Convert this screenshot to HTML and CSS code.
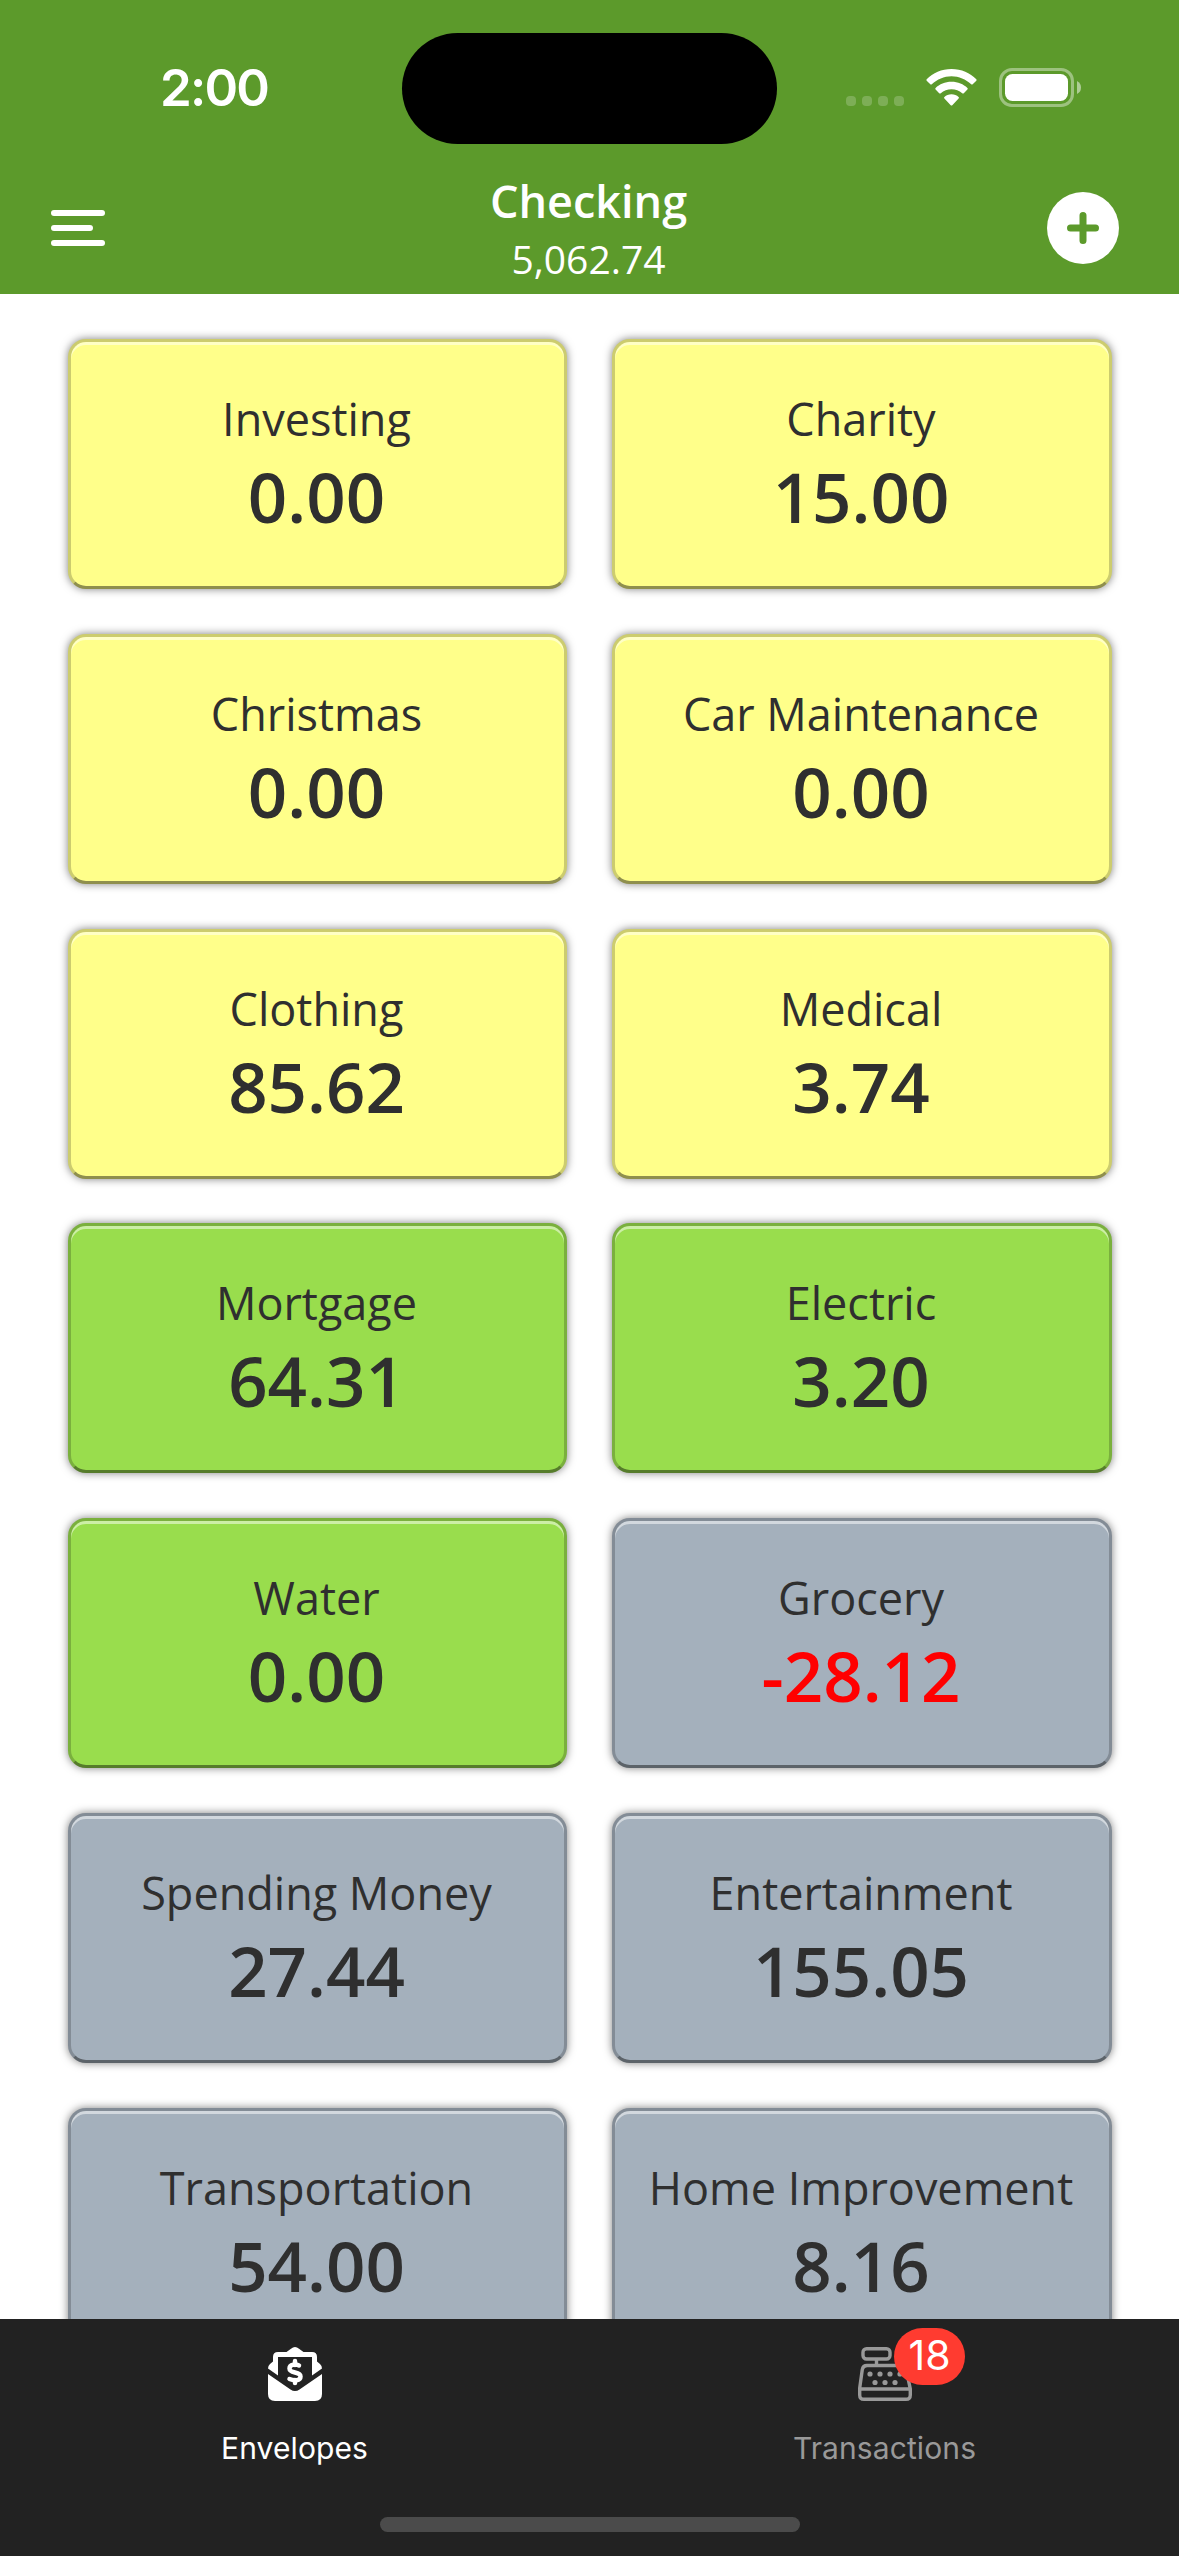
FILE: index.html
```html
<!DOCTYPE html>
<html lang="en">
<head>
<meta charset="utf-8">
<meta name="viewport" content="width=device-width, initial-scale=1">
<title>Checking</title>
<link rel="stylesheet" href="styles.css">
</head>
<body>
<header class="header">
  <div class="status">
    <div class="time">2:00</div>
    <div class="island"></div>
    <div class="indicators">
      <svg class="signal" width="58" height="10" viewBox="0 0 58 10">
        <rect width="10" height="10" rx="4"/>
        <rect x="16" width="10" height="10" rx="4"/>
        <rect x="32" width="10" height="10" rx="4"/>
        <rect x="48" width="10" height="10" rx="4"/>
      </svg>
      <svg class="wifi" width="51" height="37" viewBox="0 0 51 37">
        <path d="M25.500 0 C35.500 0 44 4 50.300 10.200 Q51 11 50.300 11.700 L46.700 15.200 Q46 15.900 45.200 15.200 C39.800 10.400 33 7.300 25.500 7.300 C18 7.300 11.200 10.400 5.800 15.200 Q5 15.900 4.300 15.200 L.7 11.700 Q0 11 .7 10.200 C7 4 15.500 0 25.500 0 Z"/>
        <path d="M25.500 12.800 C32 12.800 37.500 15.200 41.400 19 Q42.200 19.700 41.400 20.500 L37.800 24.200 Q37 24.900 36.200 24.200 C33.300 21.700 29.600 20.200 25.500 20.200 C21.400 20.200 17.700 21.700 14.800 24.200 Q14 24.900 13.200 24.200 L9.600 20.500 Q8.800 19.700 9.600 19 C13.500 15.200 19 12.800 25.500 12.800 Z"/>
        <path d="M25.500 25.300 C28.400 25.300 30.700 26.300 32.600 28 Q33.400 28.700 32.600 29.500 L26.300 36.200 Q25.500 37 24.700 36.200 L18.400 29.500 Q17.600 28.700 18.400 28 C20.300 26.300 22.600 25.300 25.500 25.300 Z"/>
      </svg>
      <svg class="battery" width="82" height="39" viewBox="0 0 82 39">
        <rect class="shell" x="1.500" y="1.500" width="72" height="36" rx="11.500"/>
        <rect x="6" y="6" width="63" height="27" rx="7.500"/>
        <path class="tip" d="M78 13 Q82 15 82 19.500 Q82 24 78 26 Z"/>
      </svg>
    </div>
  </div>
  <div class="toolbar">
    <svg class="menu" width="54" height="36" viewBox="0 0 54 36">
      <rect width="54" height="6" rx="3"/>
      <rect y="15" width="42" height="6" rx="3"/>
      <rect y="30" width="54" height="6" rx="3"/>
    </svg>
    <div class="title">
      <h1>Checking</h1>
      <div class="balance">5,062.74</div>
    </div>
    <svg class="add" width="72" height="72" viewBox="0 0 72 72">
      <circle cx="36" cy="36" r="36"/>
      <path d="M36 23.500V48.500M23.500 36H48.500"/>
    </svg>
  </div>
</header>

<main class="envelopes">
  <div class="card yellow"><div class="name">Investing</div><div class="amount">0.00</div></div>
  <div class="card yellow"><div class="name">Charity</div><div class="amount">15.00</div></div>
  <div class="card yellow"><div class="name">Christmas</div><div class="amount">0.00</div></div>
  <div class="card yellow"><div class="name">Car Maintenance</div><div class="amount">0.00</div></div>
  <div class="card yellow"><div class="name">Clothing</div><div class="amount">85.62</div></div>
  <div class="card yellow"><div class="name">Medical</div><div class="amount">3.74</div></div>
  <div class="card green"><div class="name">Mortgage</div><div class="amount">64.31</div></div>
  <div class="card green"><div class="name">Electric</div><div class="amount">3.20</div></div>
  <div class="card green"><div class="name">Water</div><div class="amount">0.00</div></div>
  <div class="card gray"><div class="name">Grocery</div><div class="amount negative">-28.12</div></div>
  <div class="card gray"><div class="name">Spending Money</div><div class="amount">27.44</div></div>
  <div class="card gray"><div class="name">Entertainment</div><div class="amount">155.05</div></div>
  <div class="card gray"><div class="name">Transportation</div><div class="amount">54.00</div></div>
  <div class="card gray"><div class="name">Home Improvement</div><div class="amount">8.16</div></div>
</main>

<nav class="tabs">
  <div class="tab active">
    <div class="tab-icon">
      <svg width="54" height="54" viewBox="0 0 54 54">
        <path fill="currentColor" d="M0 27 L22.500 42.500 Q27 45.500 31.500 42.500 L54 27 V47 Q54 54 47 54 H7 Q0 54 0 47 Z"/>
        <path fill="currentColor" d="M5 14.500 V10 Q5 5 10 5 H18.500 L23 1.700 Q27 -1.500 31 1.700 L35.500 5 H44 Q49 5 49 10 V14.500 L52 17 Q54 18.800 54 21.500 L44 28.500 V10 H10 V28.500 L0 21.500 Q0 18.800 2 17 Z"/>
        <path class="dollar" d="M27 14V18M31 18.500C28 17 21.500 17 21.500 21.500C21.500 27 32.500 24 32.500 29.500C32.500 34 26 34 21.500 32M27 33V36"/>
      </svg>
    </div>
    <div class="tab-label">Envelopes</div>
  </div>
  <div class="tab">
    <div class="tab-icon">
      <svg width="54" height="54" viewBox="0 0 54 54">
        <g class="outline">
          <rect x="5" y="1.700" width="27" height="10.300" rx="3.500"/>
          <path d="M18.500 12V18.500M10.500 18.500H43.500Q47.500 18.500 48.200 22.500L52.300 42V48Q52.300 52.300 48 52.300H6Q1.700 52.300 1.700 48V41L4.300 22.500Q5 18.500 9 18.500ZM1.700 42H52.300"/>
        </g>
        <g fill="currentColor">
          <circle cx="12" cy="27" r="2.600"/>
          <circle cx="22" cy="27" r="2.600"/>
          <circle cx="32" cy="27" r="2.600"/>
          <circle cx="42" cy="27" r="2.600"/>
          <circle cx="17" cy="35.500" r="2.600"/>
          <circle cx="27" cy="35.500" r="2.600"/>
          <circle cx="37" cy="35.500" r="2.600"/>
        </g>
      </svg>
      <span class="badge">18</span>
    </div>
    <div class="tab-label">Transactions</div>
  </div>
  <div class="home-bar"></div>
</nav>
</body>
</html>
```

FILE: styles.css
```css
* {
  box-sizing: border-box;
}
body {
  margin: 0;
  height: 2556px;
  display: flex;
  flex-direction: column;
  overflow: hidden;
  background-color: #fff;
  color: #2f2f2f;
  font-family: "Open Sans", sans-serif;
}
svg {
  display: block;
}

/* header */
.header {
  flex: none;
  height: 294px;
  background-color: #5c9a2b;
  color: #fff;
}
.status {
  height: 177px;
  display: grid;
  grid-template-columns: 402px 375px 402px;
}
.time {
  padding: 57px 0 0 160px;
  font-family: Inter, sans-serif;
  font-size: 51px;
  font-weight: 600;
  letter-spacing: -1.8px;
  line-height: 62px;
}
.island {
  height: 111px;
  margin-top: 33px;
  border-radius: 56px;
  background-color: #000;
}
.indicators {
  display: flex;
  align-items: flex-end;
  height: 107px;
  padding-left: 69px;
  fill: #fff;
}
.signal {
  margin: 0 22px 1px 0;
  opacity: 0.2;
}
.wifi {
  margin: 0 22px 1px 0;
}
.shell {
  fill: none;
  stroke: #fff;
  stroke-width: 3px;
  opacity: 0.4;
}
.tip {
  opacity: 0.5;
}
.toolbar {
  height: 117px;
  display: grid;
  grid-template-columns: 300px 1fr 300px;
}
.menu {
  margin: 33px 0 0 51px;
  fill: #fff;
}
.title {
  padding-right: 2px;
  text-align: center;
}
h1 {
  margin: 0;
  font-size: 45px;
  font-weight: 600;
  line-height: 48px;
}
.balance {
  font-size: 39px;
  line-height: 67px;
}
.add {
  margin: 15px 60px 0 auto;
  fill: #fff;
}
.add path {
  stroke: #5c9a2b;
  stroke-width: 7px;
  stroke-linecap: round;
}

/* envelopes */
.envelopes {
  flex: 1;
  min-height: 0;
  overflow: hidden;
  display: grid;
  grid-template-columns: 499px 500px;
  grid-auto-rows: 250px;
  align-content: start;
  gap: 44.75px 45px;
  padding: 45px 67px 0 68px;
}
.card {
  padding: 43px 2px 0 0;
  border: 3px solid rgba(0, 0, 0, 0.2);
  border-bottom-color: rgba(0, 0, 0, 0.44);
  border-radius: 18px;
  box-shadow: inset 0 3px 0 rgba(255, 255, 255, 0.5), 0 0 9px rgba(0, 0, 0, 0.5);
  text-align: center;
}
.yellow {
  background-color: #ffff8a;
}
.green {
  background-color: #99dd4d;
}
.gray {
  background-color: #a4b0bc;
}
.name {
  font-size: 45px;
  line-height: 67px;
}
.amount {
  font-size: 69px;
  font-weight: 600;
  line-height: 88px;
}
.negative {
  color: #f00;
}

/* tabs */
.tabs {
  position: relative;
  flex: none;
  height: 237px;
  display: grid;
  grid-template-columns: 590px 590px;
  padding-top: 28px;
  background-color: #222;
}
.tab {
  display: flex;
  flex-direction: column;
  align-items: center;
  color: #999;
}
.active {
  color: #fff;
}
.tab-icon {
  position: relative;
}
.tab-label {
  margin-top: 27px;
  padding-right: 1px;
  font-family: Inter, sans-serif;
  font-size: 30px;
  letter-spacing: 0.1px;
  line-height: 40px;
}
.dollar {
  fill: none;
  stroke: currentColor;
  stroke-width: 4.5px;
  stroke-linecap: round;
}
.outline {
  fill: none;
  stroke: currentColor;
  stroke-width: 3.4px;
}
.badge {
  position: absolute;
  left: 36px;
  top: -19px;
  width: 71px;
  height: 57px;
  border-radius: 29px;
  background-color: #ff3b30;
  color: #fff;
  font-family: Inter, sans-serif;
  font-size: 41px;
  line-height: 55px;
  text-align: center;
}
.home-bar {
  position: absolute;
  left: 380px;
  bottom: 24px;
  width: 420px;
  height: 15px;
  border-radius: 8px;
  background-color: #4b4b4b;
}
```
